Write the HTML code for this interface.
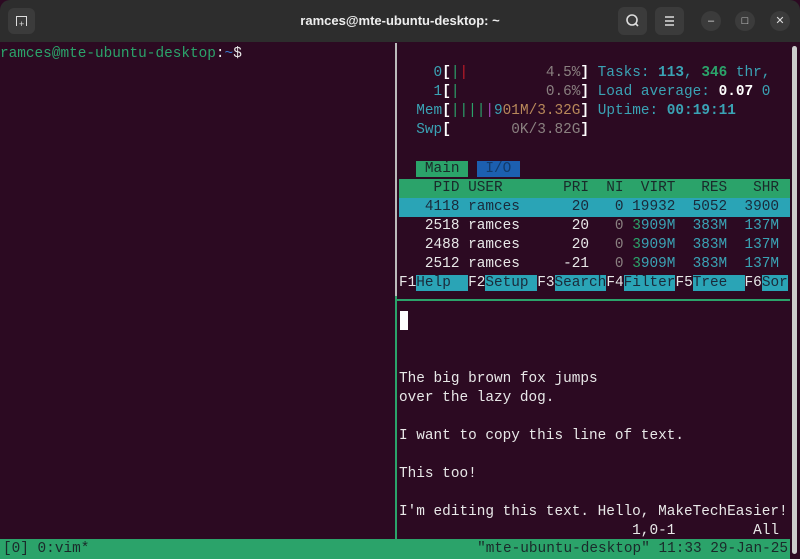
<!DOCTYPE html><html><head><style>
body{margin:0;width:800px;height:559px;overflow:hidden;background:#2c0a22;font-family:"Liberation Mono",monospace;}
#tb{position:absolute;left:0;top:0;width:800px;height:42px;background:#2d2d2d;border-radius:10px 10px 0 0;}
#term{position:absolute;left:0;top:42px;width:800px;height:517px;background:#2c0a22;}
.l{position:absolute;white-space:pre;font-size:14.4px;line-height:19px;height:19px;color:#e8e8e8;}
.c{color:#3aa3b5}.g{color:#2ba36a}.w{color:#fff;font-weight:bold}.gr{color:#8a8080}.r{color:#c01c28}.o{color:#b8885a}.p{color:#a24ab8}.dk{color:#2c0a22}
.cb{background:#2aa4b6;color:#1a2a3a}
.btn{position:absolute;background:#3b3b3b;border-radius:6px;}
.cir{position:absolute;width:20px;height:20px;border-radius:50%;background:#3b3b3b;color:#ddd;font:11px "Liberation Sans",sans-serif;text-align:center;line-height:20px;}
</style></head><body>
<div id="tb">
<div class="btn" style="left:8px;top:8px;width:27px;height:26px;"><div style="position:absolute;left:8px;top:8px;width:9px;height:9px;border:1.5px solid #ddd;border-bottom:none;"></div><div style="position:absolute;left:11px;top:11px;color:#ddd;font:9px sans-serif">+</div></div>
<div style="position:absolute;left:0;width:800px;top:13px;text-align:center;color:#eee;font:bold 13px 'Liberation Sans',sans-serif;">ramces@mte-ubuntu-desktop: ~</div>
<div class="btn" style="left:618px;top:7px;width:29px;height:28px;"><svg width="29" height="28"><circle cx="14" cy="13" r="5" stroke="#ddd" stroke-width="1.6" fill="none"/><line x1="17.5" y1="16.5" x2="20" y2="19" stroke="#ddd" stroke-width="1.6"/></svg></div>
<div class="btn" style="left:655px;top:7px;width:29px;height:28px;"><svg width="29" height="28"><path d="M10 10h9M10 14h9M10 18h9" stroke="#ddd" stroke-width="1.5"/></svg></div>
<div class="cir" style="left:701px;top:11px;">–</div>
<div class="cir" style="left:735px;top:11px;">□</div>
<div class="cir" style="left:770px;top:11px;">✕</div>
</div>
<div id="term"></div>
<div style="position:absolute;left:395px;top:43px;width:2px;height:253px;background:#bbb;"></div>
<div style="position:absolute;left:395px;top:296px;width:2px;height:244px;background:#2ba36a;"></div>
<div style="position:absolute;left:395px;top:299px;width:395px;height:2px;background:#2ba36a;"></div>
<div style="position:absolute;left:792px;top:46px;width:5px;height:508px;background:#ccc;border-radius:3px;"></div>
<div class="l" style="left:0;top:45px"><span class="g">ramces@mte-ubuntu-desktop</span>:<span style="color:#3b7bd0">~</span>$</div>
<div style="position:absolute;left:399px;top:45px;">
<div class="l" style="top:19px">    <span class="c">0</span><span class="w">[</span><span class="g">|</span><span class="r">|</span>         <span class="gr">4.5%</span><span class="w">]</span> <span class="c">Tasks: </span><span class="c" style="font-weight:bold">113</span><span class="c">, </span><span class="g" style="font-weight:bold">346</span><span class="c"> thr,</span></div>
<div class="l" style="top:38px">    <span class="c">1</span><span class="w">[</span><span class="g">|</span>          <span class="gr">0.6%</span><span class="w">]</span> <span class="c">Load average: </span><span class="w">0.07</span> <span class="c">0</span></div>
<div class="l" style="top:57px">  <span class="c">Mem</span><span class="w">[</span><span class="g">||||</span><span class="p">|</span><span class="c">9</span><span class="o">01M/3.32G</span><span class="w">]</span> <span class="c">Uptime: </span><span class="c" style="font-weight:bold">00:19:11</span></div>
<div class="l" style="top:76px">  <span class="c">Swp</span><span class="w">[</span>       <span class="gr">0K/3.82G</span><span class="w">]</span></div>
<div class="l" style="top:115px">  <span style="background:#2ba36a;color:#1a2a2a"> Main </span> <span style="background:#1c5fb0;color:#123a6a"> I/O </span></div>
<div class="l" style="top:134px;width:391px;background:#2ba36a;color:#1a2a2a">    PID USER       PRI  NI  VIRT   RES   SHR</div>
<div class="l cb" style="top:153px;width:391px;">   4118 ramces      20   0 19932  5052  3900</div>
<div class="l" style="top:172px">   2518 ramces      20   <span class="gr">0</span> <span class="g">3</span><span class="c">909M  383M  137M</span></div>
<div class="l" style="top:191px">   2488 ramces      20   <span class="gr">0</span> <span class="g">3</span><span class="c">909M  383M  137M</span></div>
<div class="l" style="top:210px">   2512 ramces     -21   <span class="gr">0</span> <span class="g">3</span><span class="c">909M  383M  137M</span></div>
<div class="l" style="top:229px">F1<span class="cb">Help  </span>F2<span class="cb">Setup </span>F3<span class="cb">Search</span>F4<span class="cb">Filter</span>F5<span class="cb">Tree  </span>F6<span class="cb">Sor</span></div>
<div style="position:absolute;left:1px;top:266px;width:8px;height:19px;background:#fff;"></div>
<div class="l" style="top:325px">The big brown fox jumps</div>
<div class="l" style="top:344px">over the lazy dog.</div>
<div class="l" style="top:382px">I want to copy this line of text.</div>
<div class="l" style="top:420px">This too!</div>
<div class="l" style="top:458px">I'm editing this text. Hello, MakeTechEasier!</div>
<div class="l" style="top:477px">                           1,0-1         All</div>
</div>
<div style="position:absolute;left:0;top:539px;width:790px;height:20px;background:#2ba36a;"></div>
<div class="l" style="left:3px;top:540px;color:#1a2a2a">[0] 0:vim*</div>
<div class="l" style="right:12px;top:540px;color:#1a2a2a">"mte-ubuntu-desktop" 11:33 29-Jan-25</div>
</body></html>
